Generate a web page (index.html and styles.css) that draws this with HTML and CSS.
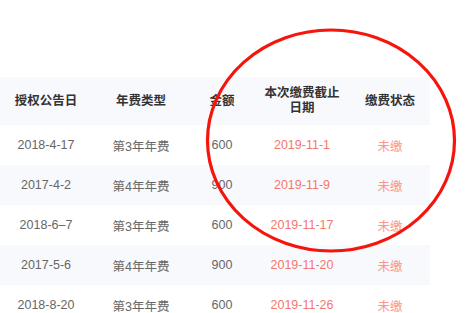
FILE: index.html
```html
<!DOCTYPE html>
<html lang="zh">
<head>
<meta charset="utf-8">
<link rel="stylesheet" href="styles.css">
</head>
<body>
<div class="page">
  <table class="fees">
    <colgroup>
      <col class="c1"><col class="c2"><col class="c3"><col class="c4"><col class="c5">
    </colgroup>
    <thead>
      <tr>
        <th>授权公告日</th>
        <th>年费类型</th>
        <th>金额</th>
        <th class="wrap">本次缴费截止<br>日期</th>
        <th>缴费状态</th>
      </tr>
    </thead>
    <tbody>
      <tr><td>2018-4-17</td><td>第3年年费</td><td>600</td><td class="due">2019-11-1</td><td class="state">未缴</td></tr>
      <tr class="alt"><td>2017-4-2</td><td>第4年年费</td><td>900</td><td class="due">2019-11-9</td><td class="state">未缴</td></tr>
      <tr><td>2018-6–7</td><td>第3年年费</td><td>600</td><td class="due">2019-11-17</td><td class="state">未缴</td></tr>
      <tr class="alt"><td>2017-5-6</td><td>第4年年费</td><td>900</td><td class="due">2019-11-20</td><td class="state">未缴</td></tr>
      <tr><td>2018-8-20</td><td>第3年年费</td><td>600</td><td class="due">2019-11-26</td><td class="state">未缴</td></tr>
    </tbody>
  </table>
  <svg class="ring" width="465" height="313" viewBox="0 0 465 313">
    <ellipse cx="331" cy="140.5" rx="123.5" ry="110.5" fill="none" stroke="#f5150c" stroke-width="3.2"/>
  </svg>
</div>
</body>
</html>
```
FILE: styles.css
```css
html, body {
  margin: 0;
  padding: 0;
  background: #fff;
}
.page {
  position: relative;
  width: 465px;
  height: 313px;
  overflow: hidden;
  padding-top: 77px;
  box-sizing: border-box;
  font-family: "Liberation Sans", "Noto Sans CJK SC", sans-serif;
}
.fees {
  width: 430px;
  border-collapse: collapse;
  table-layout: fixed;
}
.c1 { width: 92px; }
.c2 { width: 98px; }
.c3 { width: 64px; }
.c4 { width: 96px; }
.c5 { width: 80px; }
.fees th {
  height: 48px;
  padding: 0;
  background: #f8f9fd;
  color: #333;
  font-size: 12.5px;
  font-weight: bold;
  text-align: center;
  vertical-align: middle;
  line-height: 15px;
}
.fees td {
  height: 40px;
  padding: 0;
  color: #666;
  font-size: 12.5px;
  text-align: center;
  vertical-align: middle;
}
.fees tr.alt td {
  background: #f8f9fd;
}
.fees td.due {
  color: #f7766b;
}
.fees td.state {
  color: #fa968c;
}
.ring {
  position: absolute;
  left: 0;
  top: 0;
  pointer-events: none;
}
```
